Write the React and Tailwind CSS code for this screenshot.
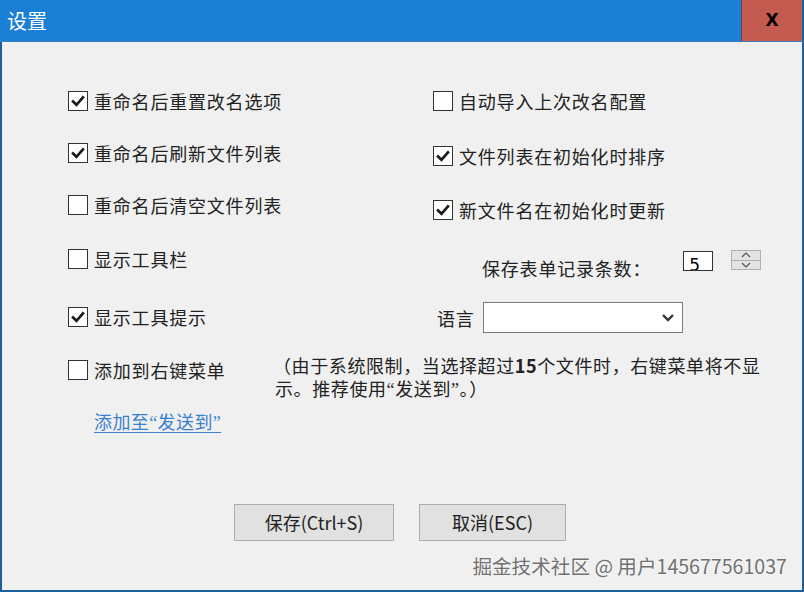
import React from 'react';

const cjk = { fontFamily: '"Noto Sans CJK SC", "Noto Sans", sans-serif' };
const quote = { fontFamily: '"Liberation Serif", serif' };

function Check({ checked, label, className = '' }) {
  return (
    <div className={`flex items-center h-[20px] ${className}`}>
      <div className="w-[20px] h-[20px] bg-white border border-[#333] flex items-center justify-center shrink-0">
        {checked && (
          <svg width="18" height="18" viewBox="0 0 20 20">
            <path d="M4.5 10.5 L8.3 14.2 L15.5 6" stroke="#1a1a1a" strokeWidth="3" fill="none" strokeLinecap="square" />
          </svg>
        )}
      </div>
      <span className="ml-[6px] text-[18px] tracking-[0.8px] text-[#222] leading-[20px] whitespace-nowrap">{label}</span>
    </div>
  );
}

export default function App() {
  return (
    <div className="w-[804px] h-[592px] flex flex-col bg-[#f0f0f0] overflow-hidden" style={cjk}>
      {/* title bar */}
      <div className="h-[42px] flex bg-[#1a80d6] border-b border-[#3a7cbf] shrink-0">
        <div className="flex-1 flex items-center pl-[7px] text-white text-[20px]">设置</div>
        <div className="w-[63px] bg-[#c35b50] border-l border-[#7d3a35] border-r-2 border-r-[#1d5f9e] flex items-center justify-center">
          <span className="text-black text-[17px] font-bold" style={{ fontFamily: '"DejaVu Sans", sans-serif' }}>X</span>
        </div>
      </div>

      {/* body */}
      <div className="flex-1 relative flex flex-col border-x-2 border-b-2 border-[#1d5f9e]">
        <div className="flex pt-[49px]">
          <div className="w-[365px] ml-[66px] flex flex-col">
            <Check checked label="重命名后重置改名选项" />
            <Check checked label="重命名后刷新文件列表" className="mt-[32px]" />
            <Check label="重命名后清空文件列表" className="mt-[32px]" />
            <Check label="显示工具栏" className="mt-[34px]" />
            <Check checked label="显示工具提示" className="mt-[38px]" />
          </div>
          <div className="flex flex-col">
            <Check label="自动导入上次改名配置" />
            <Check checked label="文件列表在初始化时排序" className="mt-[35px]" />
            <Check checked label="新文件名在初始化时更新" className="mt-[34px]" />
            <div className="flex items-start mt-[30px] h-[20px]">
              <span className="ml-[49px] mt-[8px] text-[18px] tracking-[0.8px] leading-[20px] text-[#222] whitespace-nowrap">保存表单记录条数：</span>
              <div className="ml-[32px] mt-[1px] w-[30px] h-[20px] bg-white border border-[#333] overflow-hidden">
                <span className="block pl-[5px] pt-[3px] text-[17px] leading-[20px] text-black" style={{ fontFamily: '"DejaVu Sans", sans-serif' }}>5</span>
              </div>
              <div className="ml-[18px] w-[30px] h-[20px] bg-[#e3e3e3] border border-[#b0b0b0] flex flex-col">
                <div className="flex-1 flex items-center justify-center border-b border-[#b0b0b0]">
                  <svg width="10" height="6" viewBox="0 0 10 6"><path d="M1 5 L5 1 L9 5" stroke="#555" strokeWidth="1.2" fill="none" /></svg>
                </div>
                <div className="flex-1 flex items-center justify-center">
                  <svg width="10" height="6" viewBox="0 0 10 6"><path d="M1 1 L5 5 L9 1" stroke="#555" strokeWidth="1.2" fill="none" /></svg>
                </div>
              </div>
            </div>
            <div className="flex items-center mt-[32px]">
              <span className="ml-[4px] text-[18px] tracking-[0.8px] text-[#222] leading-[20px]">语言</span>
              <div className="ml-[8px] w-[200px] h-[31px] bg-white border border-[#7a7a7a] flex items-center justify-end pr-[7px]">
                <svg width="14" height="9" viewBox="0 0 14 9"><path d="M2 2 L7 7 L12 2" stroke="#333" strokeWidth="2.4" fill="none" /></svg>
              </div>
            </div>
          </div>
        </div>

        <div className="flex items-start mt-[21px] ml-[66px]">
          <Check label="添加到右键菜单" className="mt-[6px] w-[207px] shrink-0" />
          <div className="flex flex-col gap-[1px] text-[18px] leading-[22px] tracking-[0.6px] text-[#222] whitespace-nowrap">
            <span className="-ml-[2px]">（由于系统限制，当选择超过<b>15</b>个文件时，右键菜单将不显</span>
            <span>示。推荐使用<span style={quote}>“</span>发送到<span style={quote}>”</span>。）</span>
          </div>
        </div>

        <a href="#" className="mt-[10px] ml-[92px] w-fit text-[18px] leading-[20px] tracking-[0.4px] text-[#3a80d2] underline underline-offset-[3px]">
          添加至<span style={quote}>“</span>发送到<span style={quote}>”</span>
        </a>

        <div className="flex mt-[71px] ml-[232px] gap-[25px]">
          <button className="w-[160px] h-[37px] bg-[#e1e1e1] border border-[#adadad] text-[18px] text-[#222]">
            保存(Ctrl+S)
          </button>
          <button className="w-[147px] h-[37px] bg-[#e1e1e1] border border-[#adadad] text-[18px] text-[#222]">
            取消(ESC)
          </button>
        </div>

        <div className="absolute right-[15px] bottom-[11px] text-[19.6px] text-[#707070] leading-[26px] whitespace-nowrap" style={{ textShadow: '0 0 2px #fff' }}>
          掘金技术社区 @ 用户145677561037
        </div>
      </div>
    </div>
  );
}
